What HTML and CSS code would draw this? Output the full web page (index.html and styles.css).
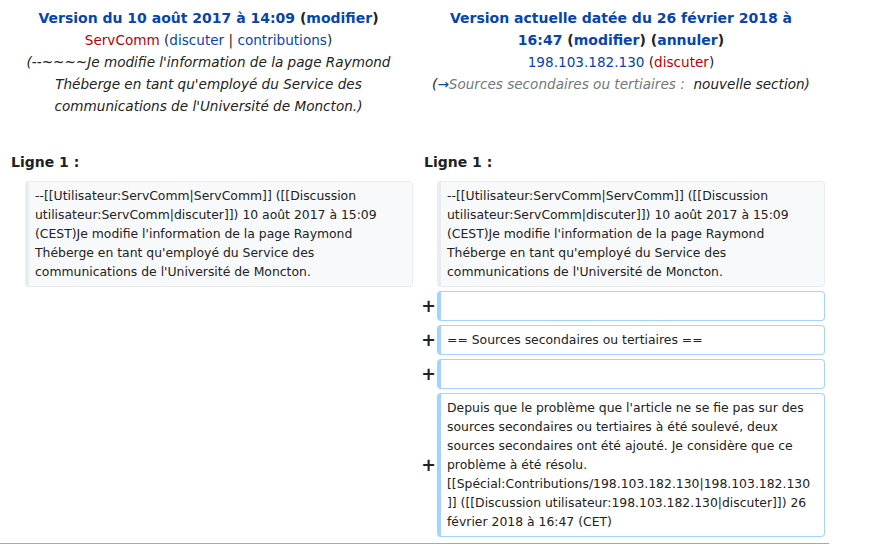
FILE: index.html
```html
<!DOCTYPE html>
<html lang="fr">
<head>
<meta charset="utf-8">
<title>Différence entre les versions</title>
<link rel="stylesheet" href="styles.css">
</head>
<body>
<div class="page">
  <div class="diff">
    <div class="title">
      <div class="head"><a class="link" href="#">Version du 10 août 2017 à 14:09</a> (<a class="link" href="#">modifier</a>)</div>
      <div><a class="new" href="#">ServComm</a> (<a class="link" href="#">discuter</a> | <a class="link" href="#">contributions</a>)</div>
      <div class="comment">(--~~~~Je modifie l'information de la page Raymond Théberge en tant qu'employé du Service des communications de l'Université de Moncton.)</div>
    </div>
    <div class="title">
      <div class="head"><a class="link" href="#">Version actuelle datée du 26 février 2018 à 16:47</a> (<a class="link" href="#">modifier</a>) (<a class="link" href="#">annuler</a>)</div>
      <div><a class="link" href="#">198.103.182.130</a> (<a class="new" href="#">discuter</a>)</div>
      <div class="comment">(<span class="autocomment"><a class="link" href="#">→</a>Sources secondaires ou tertiaires&nbsp;:&nbsp;</span> nouvelle section)</div>
    </div>

    <div class="lineno">Ligne 1 :</div>
    <div class="lineno">Ligne 1 :</div>

    <div class="marker"></div>
    <div class="line context">--[[Utilisateur:ServComm|ServComm]] ([[Discussion utilisateur:ServComm|discuter]]) 10 août 2017 à 15:09 (CEST)Je modifie l'information de la page Raymond Théberge en tant qu'employé du Service des communications de l'Université de Moncton.</div>
    <div class="marker"></div>
    <div class="line context">--[[Utilisateur:ServComm|ServComm]] ([[Discussion utilisateur:ServComm|discuter]]) 10 août 2017 à 15:09 (CEST)Je modifie l'information de la page Raymond Théberge en tant qu'employé du Service des communications de l'Université de Moncton.</div>

    <div class="empty-left"></div>
    <div class="marker">+</div>
    <div class="line added"><br></div>

    <div class="empty-left"></div>
    <div class="marker">+</div>
    <div class="line added">== Sources secondaires ou tertiaires ==</div>

    <div class="empty-left"></div>
    <div class="marker">+</div>
    <div class="line added"><br></div>

    <div class="empty-left"></div>
    <div class="marker">+</div>
    <div class="line added">Depuis que le problème que l'article ne se fie pas sur des sources secondaires ou tertiaires à été soulevé, deux sources secondaires ont été ajouté. Je considère que ce problème à été résolu. [[Spécial:Contributions/198.103.182.130|198.103.182.130]] ([[Discussion utilisateur:198.103.182.130|discuter]]) 26 février 2018 à 16:47 (CET)</div>
  </div>
  <div class="rule"></div>
</div>
</body>
</html>
```
FILE: styles.css
```css
html, body {
  margin: 0;
  padding: 0;
  background: #ffffff;
}
body {
  font-family: "DejaVu Sans", sans-serif;
  color: #222222;
  font-size: 14px;
}
.page {
  width: 829px;
}
.diff {
  display: grid;
  grid-template-columns: 17px 388px 16px 388px;
  column-gap: 4px;
  row-gap: 4px;
  padding: 4px;
}
.title {
  grid-column: span 2;
  text-align: center;
  font-size: 13.6px;
  line-height: 22px;
  padding: 3px 12px 30px;
}
.title .head {
  font-size: 14px;
  font-weight: bold;
}
.link {
  color: #0645ad;
  text-decoration: none;
}
.new {
  color: #ba0000;
  text-decoration: none;
}
.comment {
  font-style: italic;
}
.autocomment {
  color: #72777d;
}
.lineno {
  grid-column: span 2;
  font-weight: bold;
  line-height: 22px;
  padding: 0 7px 4px;
}
.empty-left {
  grid-column: span 2;
}
.marker {
  align-self: center;
  text-align: right;
  font-weight: bold;
  font-size: 17.5px;
  line-height: 1.2;
  margin-right: -3px;
}
.line {
  font-size: 12.4px;
  line-height: 19px;
  white-space: pre-wrap;
  word-wrap: break-word;
  border-style: solid;
  border-width: 1px 1px 1px 4px;
  border-radius: 4px;
  padding: 4px 12px 5px 6px;
}
.context {
  background: #f8f9fa;
  border-color: #eaecf0;
}
.added {
  background: #ffffff;
  border-color: #a3d3ff;
}
.rule {
  margin-top: 2px;
  border-top: 1px solid #a2a9b1;
}
```
